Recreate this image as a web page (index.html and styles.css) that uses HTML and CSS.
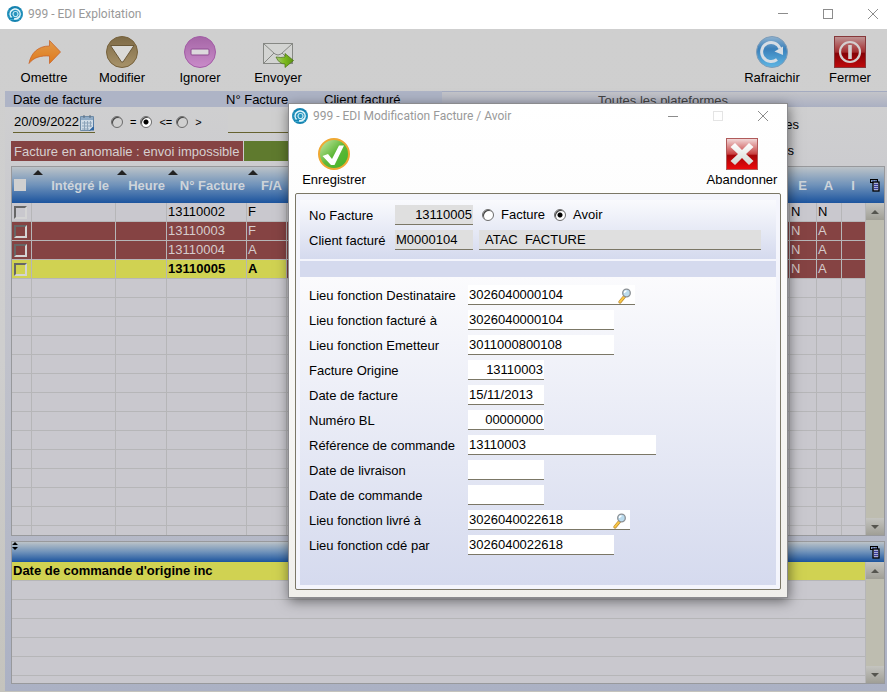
FILE: index.html
```html
<!DOCTYPE html>
<html lang="fr">
<head>
<meta charset="utf-8">
<title>999 - EDI Exploitation</title>
<link rel="stylesheet" href="styles.css">
</head>
<body>
<svg class="defs" aria-hidden="true">
  <defs>
    <linearGradient id="orange" x1="0" y1="0" x2="0" y2="1"><stop offset="0" stop-color="#e09a4c"/><stop offset="1" stop-color="#e07a1c"/></linearGradient>
    <linearGradient id="brown" x1="0" y1="0" x2="0" y2="1"><stop offset="0" stop-color="#7d6a46"/><stop offset="1" stop-color="#a8936a"/></linearGradient>
    <linearGradient id="purple" x1="0" y1="0" x2="0" y2="1"><stop offset="0" stop-color="#a566a6"/><stop offset="1" stop-color="#c98bc9"/></linearGradient>
    <linearGradient id="arrow" x1="0" y1="0" x2="1" y2="0"><stop offset="0" stop-color="#a8c878"/><stop offset=".5" stop-color="#7cba1c"/><stop offset="1" stop-color="#5c9414"/></linearGradient>
    <linearGradient id="blue" x1="0" y1="0" x2="0" y2="1"><stop offset="0" stop-color="#8fb2cf"/><stop offset=".4" stop-color="#3a80ba"/><stop offset="1" stop-color="#5fb6e4"/></linearGradient>
    <linearGradient id="red" x1="0" y1="0" x2="0" y2="1"><stop offset="0" stop-color="#bf9696"/><stop offset=".5" stop-color="#a42c2e"/><stop offset=".55" stop-color="#860206"/><stop offset="1" stop-color="#c00a0c"/></linearGradient>
    <linearGradient id="redlight" x1="0" y1="0" x2="0" y2="1"><stop offset="0" stop-color="#f2dcdc"/><stop offset=".5" stop-color="#c84040"/><stop offset=".55" stop-color="#a50408"/><stop offset="1" stop-color="#ee0a0c"/></linearGradient>
    <linearGradient id="green" x1="0" y1="0" x2="1" y2="1"><stop offset="0" stop-color="#d2ecb0"/><stop offset=".5" stop-color="#5fb838"/><stop offset="1" stop-color="#3fb428"/></linearGradient>
    <linearGradient id="silver" x1="0" y1="0" x2="0" y2="1"><stop offset="0" stop-color="#fff"/><stop offset="1" stop-color="#d4d8d4"/></linearGradient>
    <symbol id="logo" viewBox="0 0 16 16">
      <circle cx="8" cy="8" r="8" fill="#1583b0"/>
      <path d="M1 5h14M0 8h16M1 11h14M3 13.500h10" stroke="#3aa7cd" stroke-width="1"/>
      <path d="M4.500 11.500A5 5 0 1 1 12.500 10.500Q11 13 7 13" fill="none" stroke="#e4f6fb" stroke-width="1.500"/>
      <circle cx="8.500" cy="8" r="2.500" fill="none" stroke="#bfe8f4" stroke-width="1.200"/>
    </symbol>
    <symbol id="lens" viewBox="0 0 16 16">
      <path d="M7.500 8.500L3 14" stroke="#b9852e" stroke-width="3.200" stroke-linecap="round"/>
      <path d="M7.300 8.700L3 13.800" stroke="#f9c845" stroke-width="2" stroke-linecap="round"/>
      <circle cx="9.500" cy="5" r="3.800" fill="#bcdcee" stroke="#8c9094" stroke-width="1.300"/>
      <path d="M7.500 5a2 2 0 0 1 2-2" stroke="#fff" stroke-width="1.300" fill="none"/>
    </symbol>
    <symbol id="cols" viewBox="0 0 10 13">
      <path d="M0 .5h8M.5 0v4M0 3.500h3M7.500 0v3" fill="none" stroke="#000"/>
      <path d="M2 2h5" stroke="#3a45a0" stroke-dasharray="2 1"/>
      <rect x="3" y="3" width="6" height="9" fill="#a9aed8" stroke="#000" stroke-width="1.300"/>
      <path d="M4 5.500h4M4 7.500h4M4 9.500h4" stroke="#3a3f9c"/>
    </symbol>
  </defs>
</svg>

<header class="titlebar">
  <svg class="logo"><use href="#logo"/></svg>
  <h1>999 - EDI Exploitation</h1>
  <div class="winbtns">
    <button type="button" aria-label="Réduire"><svg viewBox="0 0 12 12"><path d="M1 5.500h10"/></svg></button>
    <button type="button" aria-label="Agrandir"><svg viewBox="0 0 12 12"><rect x="1.500" y="1.500" width="9" height="9"/></svg></button>
    <button type="button" aria-label="Fermer la fenêtre"><svg viewBox="0 0 12 12"><path d="M1 1l10 10M11 1L1 11"/></svg></button>
  </div>
</header>

<main class="app">
  <nav class="toolbar">
    <button type="button" class="tool"><svg viewBox="0 0 32 32"><path d="M1 27.500C3 17 10 10 21.500 10V4.500L32.500 16l-11 11.500V20C13 19.500 6 21 1 27.500z" fill="url(#orange)" stroke="#c9652c" stroke-width=".8"/></svg>Omettre</button>
    <button type="button" class="tool"><svg viewBox="0 0 32 32"><circle cx="16" cy="16" r="15.500" fill="url(#brown)" stroke="#77623c"/><path d="M4.500 9.500h23.500L17 26h-1.500z" fill="#dadad8" stroke="#6b5938" stroke-linejoin="round"/></svg>Modifier</button>
    <button type="button" class="tool"><svg viewBox="0 0 32 32"><circle cx="16" cy="16" r="15.500" fill="url(#purple)" stroke="#a35ca6"/><rect x="7" y="13" width="18" height="6" rx="1" fill="#dcd9dc" stroke="#8f4c92"/></svg>Ignorer</button>
    <button type="button" class="tool"><svg viewBox="0 0 32 32"><rect x="1.500" y="7.500" width="29" height="20" fill="#d3d4d2" stroke="#868884"/><path d="M2 8l11 10q3 2 6 0L30 8M2 27l10-10M30 27L20 17" fill="none" stroke="#868884"/><path d="M14 21q5 1 9 0v-3.500l8.500 7-8.500 7V28q-6 0-9-7z" fill="url(#arrow)" stroke="#466e10" stroke-width=".7"/></svg>Envoyer</button>
    <button type="button" class="tool push"><svg viewBox="0 0 32 32"><circle cx="16" cy="16" r="15.500" fill="url(#blue)" stroke="#7d9cb8"/><path d="M21 23.500A9.500 9.500 0 1 1 24 12.500" fill="none" stroke="#d6dde4" stroke-width="3"/><path d="M18.500 15.500l8.500-5v8.500z" fill="#d6dde4"/></svg>Rafraichir</button>
    <button type="button" class="tool"><svg viewBox="0 0 32 32"><rect x=".5" y=".5" width="31" height="31" fill="url(#red)" stroke="#86383a"/><circle cx="16" cy="16" r="10" fill="none" stroke="#d4d0d0" stroke-width="2.200"/><path d="M16 9v14" stroke="#d4d0d0" stroke-width="3.600"/></svg>Fermer</button>
  </nav>

  <div class="bands">
    <div class="band"><span class="b1">Date de facture</span><span class="b2">N° Facture</span><span>Client facturé</span></div>
    <div class="band band-right">Toutes les plateformes</div>
  </div>

  <div class="panel">
    <form class="filters">
      <input class="field date" aria-label="Date de facture" value="20/09/2022">
      <button type="button" class="cal" aria-label="Calendrier"><svg viewBox="0 0 15 16"><path d="M.5 1.500h13v10l-3 4H.5z" fill="#cfdbe6" stroke="#6f8ca8"/><rect x="1" y="2" width="12" height="3" fill="#8fabc6"/><path d="M4 0v3M10 0v3" stroke="#5a6a7c"/><path d="M2 8h10M2 11h10M2 14h7M4.500 6v9M7.500 6v9M10.500 6v6" stroke="#8da4ba"/><path d="M14 1v14.500H9l4.500-4z" fill="#2d64a0"/></svg></button>
      <label class="opt first"><input type="radio" name="op">=</label>
      <label class="opt"><input type="radio" name="op" checked>&lt;=</label>
      <label class="opt"><input type="radio" name="op">&gt;</label>
      <input class="field num" aria-label="N° Facture">
      <div class="tails"><span>Toutes</span><span>Envoyés</span></div>
    </form>
    <div class="legend"><span class="bad">Facture en anomalie : envoi impossible</span><span class="good"></span></div>

    <div class="grid main">
      <div class="view">
        <table>
          <colgroup><col class="c1"><col class="c2"><col class="c3"><col class="c4"><col class="c5"><col><col class="c7"><col class="c8"><col class="c9"></colgroup>
          <thead><tr><th><input type="checkbox" class="all" aria-label="Tout"></th><th class="s wide">Intégré le</th><th class="s">Heure</th><th class="s">N° Facture</th><th class="s fa">F/A</th><th class="s"></th><th class="c">E</th><th class="c">A</th><th class="c">I</th></tr></thead>
          <tbody>
            <tr><td><input type="checkbox" aria-label="13110002"></td><td></td><td></td><td>13110002</td><td>F</td><td></td><td>N</td><td>N</td><td></td></tr>
            <tr class="err"><td><input type="checkbox" aria-label="13110003"></td><td></td><td></td><td>13110003</td><td>F</td><td></td><td>N</td><td>A</td><td></td></tr>
            <tr class="err"><td><input type="checkbox" aria-label="13110004"></td><td></td><td></td><td>13110004</td><td>A</td><td></td><td>N</td><td>A</td><td></td></tr>
            <tr class="err"><td class="sel"><input type="checkbox" aria-label="13110005"></td><td class="sel"></td><td class="sel"></td><td class="sel">13110005</td><td class="sel">A</td><td></td><td>N</td><td>A</td><td></td></tr>
            <tr><td></td><td></td><td></td><td></td><td></td><td></td><td></td><td></td><td></td></tr>
            <tr><td></td><td></td><td></td><td></td><td></td><td></td><td></td><td></td><td></td></tr>
            <tr><td></td><td></td><td></td><td></td><td></td><td></td><td></td><td></td><td></td></tr>
            <tr><td></td><td></td><td></td><td></td><td></td><td></td><td></td><td></td><td></td></tr>
            <tr><td></td><td></td><td></td><td></td><td></td><td></td><td></td><td></td><td></td></tr>
            <tr><td></td><td></td><td></td><td></td><td></td><td></td><td></td><td></td><td></td></tr>
            <tr><td></td><td></td><td></td><td></td><td></td><td></td><td></td><td></td><td></td></tr>
            <tr><td></td><td></td><td></td><td></td><td></td><td></td><td></td><td></td><td></td></tr>
            <tr><td></td><td></td><td></td><td></td><td></td><td></td><td></td><td></td><td></td></tr>
            <tr><td></td><td></td><td></td><td></td><td></td><td></td><td></td><td></td><td></td></tr>
            <tr><td></td><td></td><td></td><td></td><td></td><td></td><td></td><td></td><td></td></tr>
            <tr><td></td><td></td><td></td><td></td><td></td><td></td><td></td><td></td><td></td></tr>
            <tr><td></td><td></td><td></td><td></td><td></td><td></td><td></td><td></td><td></td></tr>
            <tr class="cut"><td></td><td></td><td></td><td></td><td></td><td></td><td></td><td></td><td></td></tr>
          </tbody>
        </table>
      </div>
      <div class="scroll">
        <button type="button" class="corner" aria-label="Colonnes"><svg><use href="#cols"/></svg></button>
        <button type="button" class="arrow" aria-label="Haut"><i class="up"></i></button>
        <div class="track"></div>
        <button type="button" class="arrow" aria-label="Bas"><i class="down"></i></button>
      </div>
    </div>

    <div class="grid lower">
      <div class="view">
        <table>
          <thead><tr><th><svg class="sort" viewBox="0 0 6 8"><path d="M3 0l3 3H0zM3 8L0 5h6z"/></svg></th></tr></thead>
          <tbody>
            <tr><td class="sel">Date de commande d'origine inc</td></tr>
            <tr><td></td></tr><tr><td></td></tr><tr><td></td></tr><tr><td></td></tr><tr><td></td></tr><tr class="cut"><td></td></tr>
          </tbody>
        </table>
      </div>
      <div class="scroll">
        <button type="button" class="corner" aria-label="Colonnes"><svg><use href="#cols"/></svg></button>
        <button type="button" class="arrow" aria-label="Haut"><i class="up"></i></button>
        <div class="track"></div>
        <button type="button" class="arrow" aria-label="Bas"><i class="down"></i></button>
      </div>
    </div>
  </div>
</main>

<section class="dialog" role="dialog" aria-labelledby="dlg-title">
  <header class="titlebar small">
    <svg class="logo"><use href="#logo"/></svg>
    <h2 id="dlg-title">999 - EDI Modification Facture / Avoir</h2>
    <div class="winbtns">
      <button type="button" aria-label="Réduire"><svg viewBox="0 0 12 12"><path d="M1 6.500h10"/></svg></button>
      <button type="button" aria-label="Agrandir" disabled><svg viewBox="0 0 12 12"><rect x="1.500" y="1.500" width="9" height="9"/></svg></button>
      <button type="button" aria-label="Fermer la fenêtre"><svg viewBox="0 0 12 12"><path d="M1 1l10 10M11 1L1 11"/></svg></button>
    </div>
  </header>
  <div class="actions">
    <button type="button" class="tool"><svg viewBox="0 0 32 32"><circle cx="16" cy="16" r="15" fill="url(#green)" stroke="#efa832" stroke-width="2"/><path d="M4.500 18l5.500-2 4 5 7-13.500h5L16.500 27h-3.500z" fill="#fff"/></svg>Enregistrer</button>
    <button type="button" class="tool"><svg viewBox="0 0 32 32"><rect x=".5" y=".5" width="31" height="31" fill="url(#redlight)" stroke="#b05a5a"/><path d="M9 5l7 7 7-7 4.500 4-7.500 7 7.500 7-4.500 4-7-7-7 7-4.500-4 7.500-7-7.500-7z" fill="url(#silver)"/></svg>Abandonner</button>
  </div>
  <form class="frame">
    <div class="top">
      <div class="row"><label for="no">No Facture</label><input id="no" class="field ro w78 r" value="13110005" readonly>
        <label class="opt"><input type="radio" name="kind">Facture</label>
        <label class="opt"><input type="radio" name="kind" checked>Avoir</label></div>
      <div class="row"><label for="cl">Client facturé</label><input id="cl" class="field ro w78" value="M0000104" readonly><input class="field ro name" aria-label="Nom du client" value="ATAC  FACTURE" readonly></div>
    </div>
    <div class="strip"></div>
    <div class="body">
      <div class="row"><label for="f1">Lieu fonction Destinataire</label><span class="lookup"><input id="f1" class="field w146" value="3026040000104"><button type="button" aria-label="Rechercher"><svg><use href="#lens"/></svg></button></span></div>
      <div class="row"><label for="f2">Lieu fonction facturé à</label><input id="f2" class="field w146" value="3026040000104"></div>
      <div class="row"><label for="f3">Lieu fonction Emetteur</label><input id="f3" class="field w146" value="3011000800108"></div>
      <div class="row"><label for="f4">Facture Origine</label><input id="f4" class="field w76 r" value="13110003"></div>
      <div class="row"><label for="f5">Date de facture</label><input id="f5" class="field w76" value="15/11/2013"></div>
      <div class="row"><label for="f6">Numéro BL</label><input id="f6" class="field w76 r" value="00000000"></div>
      <div class="row"><label for="f7">Référence de commande</label><input id="f7" class="field w188" value="13110003"></div>
      <div class="row"><label for="f8">Date de livraison</label><input id="f8" class="field w76"></div>
      <div class="row"><label for="f9">Date de commande</label><input id="f9" class="field w76"></div>
      <div class="row"><label for="f10">Lieu fonction livré à</label><span class="lookup"><input id="f10" class="field w141" value="3026040022618"><button type="button" aria-label="Rechercher"><svg><use href="#lens"/></svg></button></span></div>
      <div class="row"><label for="f11">Lieu fonction cdé par</label><input id="f11" class="field w146" value="3026040022618"></div>
    </div>
  </form>
</section>
</body>
</html>
```
FILE: styles.css
```css
* { box-sizing: border-box; }
body {
  margin: 0;
  min-height: 100vh;
  display: flex;
  flex-direction: column;
  position: relative;
  font: 13px/16px "Liberation Sans", Arial, sans-serif;
  color: #000;
}
button { font: inherit; color: inherit; background: none; border: 0; padding: 0; }
.defs { position: absolute; width: 0; height: 0; }

.titlebar { display: flex; align-items: center; height: 28px; padding: 0 8px 0 7px; gap: 5px; background: #fff; margin-bottom: 1px; }
.titlebar.small { height: 24px; padding: 0 18px 0 3px; background: none; }
.titlebar h1, .titlebar h2 { margin: 0; font: 12px/16px Roboto, "Open Sans", sans-serif; color: #999; }
.logo { width: 16px; height: 16px; }
.winbtns { display: flex; gap: 33px; margin-left: auto; }
.winbtns button { display: flex; }
.winbtns svg { width: 12px; height: 12px; fill: none; stroke: #8c8c8c; }
.winbtns button:disabled svg { stroke: #e4e4e4; }

.app {
  flex: 1;
  display: flex;
  flex-direction: column;
  padding: 0 0 1px 5px;
  background: linear-gradient(#cfcfcf, #cecece 50%, #c4c3bd);
}
.toolbar { display: flex; height: 62px; padding: 7px 0 0; }
.tool { display: flex; flex-direction: column; align-items: center; width: 78px; gap: 2px; }
.tool svg { width: 32px; height: 32px; overflow: visible; }
.toolbar .push { margin-left: auto; }
.toolbar .tool:last-child { margin-right: -2px; }

.bands { display: flex; line-height: 17px; }
.band { flex: 0 0 437px; display: flex; height: 16px; padding-left: 8px; background: #aeb4c6; }
.b1 { width: 213px; }
.b2 { width: 98px; }
.band-right { flex: 1; padding-left: 156px; border-top: 1px solid #a4abc0; background: linear-gradient(#c3c4c9, #abb0c2); color: #444; }

.panel {
  flex: 1;
  display: flex;
  flex-direction: column;
  padding: 5px 2px 6px 6px;
  background: linear-gradient(#cfcfd0, #c9c9ce 20%, #abb1c4);
}
.field {
  height: 20px;
  padding: 0 1px 1px;
  border: 0;
  border-bottom: 1px solid #7b7766;
  border-radius: 0;
  background: #fff;
  font: inherit;
  color: #000;
  min-width: 0;
}
.filters { display: flex; height: 29px; }
.filters .field { background: #cfcfcf; border-color: #66622f; height: 21px; }
.date { width: 67px; margin-left: 2px; }
.cal { width: 15px; height: 21px; padding-top: 2px; border-bottom: 1px solid #66622f; }
.cal svg { width: 15px; height: 16px; display: block; }
.opt { display: flex; align-items: center; gap: 6px; }
.filters .opt { height: 19px; gap: 7px; font-size: 11px; margin-right: 4px; }
.filters .opt.first { margin-left: 16px; }
.num { width: 90px; margin-left: 22px; }
.tails { margin-left: auto; margin-right: 86px; line-height: 26px; text-align: right; }
.tails span { display: block; }
.tails span:last-child { padding-right: 5px; }

input[type="radio"] {
  appearance: none;
  width: 12px;
  height: 12px;
  margin: 0;
  border: 1px solid #6c6c6c;
  border-radius: 50%;
  background: #fff;
  box-shadow: inset 1px 1px 0 #444;
}
.filters input[type="radio"] { background-color: #d0d0d0; }
input[type="radio"]:checked { background: radial-gradient(circle, #000 2px, #fff 3px); }

.legend { display: flex; height: 20px; line-height: 21px; gap: 1px; }
.bad { width: 232px; padding-left: 3px; background: #854343; color: #d6d0d0; white-space: nowrap; }
.good { width: 300px; background: #5f7a2e; }

.grid { display: flex; border: 1px solid #98999c; background: #c9c8ce; }
.main { margin-top: 5px; }
.lower { margin-top: 5px; }
.view { flex: 1; min-width: 0; }
.grid table { width: 100%; table-layout: fixed; border-collapse: separate; border-spacing: 0; }
.grid thead tr { background: linear-gradient(#bcc3c8, #6f92ba 50%, #1c549e); }
.grid th { height: 36px; padding: 2px 2px 0 0; text-align: right; color: #ced4da; white-space: nowrap; position: relative; }
.grid th:first-child { padding-top: 0; }
.grid th.wide { padding-right: 7px; }
.lower th { height: 20px; padding: 0; text-align: left; }
.grid th.c { text-align: center; }
.grid th.fa { padding-right: 5px; }
.s::before {
  content: "";
  position: absolute;
  left: 1px;
  top: 3px;
  border: 5px solid transparent;
  border-top: 0;
  border-bottom-color: #222;
}
.sort { width: 6px; height: 8px; display: block; margin: 0 0 12px; }
.grid td { height: 19px; padding: 0 0 0 1px; line-height: 18px; border-right: 1px solid #b6b6b8; border-bottom: 1px solid #b6b6b8; white-space: nowrap; }
.grid .cut td { height: 9px; border-bottom: 0; }
.lower .cut td { height: 7px; }
.err td { background: #854343; color: #d6cccc; }
.grid td.sel { background: #d0d252; color: #000; font-weight: bold; }
.c1 { width: 20px; } .c2 { width: 84px; } .c3 { width: 51px; } .c4 { width: 80px; } .c5 { width: 40px; }
.c7 { width: 27px; } .c8 { width: 25px; } .c9 { width: 24px; }
input[type="checkbox"] {
  appearance: none;
  display: block;
  width: 13px;
  height: 13px;
  margin: 0 0 0 1px;
  border: 2px solid;
  border-color: #666 #d4d4d4 #d4d4d4 #666;
}
.grid .all { width: 12px; height: 12px; margin-left: 2px; border: 0; background: #d0d0d0; }

.scroll { width: 18px; display: flex; flex-direction: column; }
.corner { height: 36px; background: linear-gradient(#bcc3c8, #6f92ba 50%, #1c549e); }
.lower .corner { height: 20px; }
.corner svg { width: 10px; height: 13px; display: block; margin: 0 auto; }
.arrow { height: 17px; display: flex; align-items: center; justify-content: center; background: linear-gradient(#c4c4c0, #a09f96); }
.track { flex: 1; background: #bebdb0; }
.up, .down { border: 4px solid transparent; }
.up { border-top: 0; border-bottom-color: #55554f; }
.down { border-bottom: 0; border-top-color: #55554f; }

.dialog {
  position: absolute;
  left: 288px;
  top: 103px;
  width: 500px;
  padding: 0 6px 7px;
  border: 1px solid #8b8b8e;
  background: linear-gradient(#fff, #fdfdfd 20%, #f0efeb);
  box-shadow: 1px 3px 12px rgba(0, 0, 0, .5);
}
.dialog .titlebar { margin: 0 -6px; }
.actions { display: flex; justify-content: space-between; height: 65px; padding: 10px 0 0; }
.frame { border: 1px solid #7b7766; border-radius: 2px; padding: 6px 4px 4px; background: #f4f5fc; }
.top { height: 59px; padding: 5px 15px 0 9px; background: linear-gradient(#f9fafd, #d5daee); display: flex; flex-direction: column; gap: 5px; }
.row { display: flex; height: 20px; }
.row > label:first-child { line-height: 22px; white-space: nowrap; flex: 0 0 159px; }
.top .row > label:first-child { flex-basis: 86px; }
.row .opt { margin-left: 9px; gap: 7px; }
.w76 { width: 76px; } .w78 { width: 78px; } .w141 { width: 141px; } .w146 { width: 146px; } .w188 { width: 188px; }
.r { text-align: right; }
.ro { background: #dfdfdf; }
.name { flex: 1; margin-left: 6px; padding-left: 6px; white-space: pre; }
.strip { height: 16px; margin-top: 2px; background: #d5daee; }
.body { padding: 8px 9px 30px; background: linear-gradient(#fbfbfd, #d5daee); display: flex; flex-direction: column; gap: 5px; }
.lookup { display: flex; }
.lookup button { width: 21px; padding: 2px 0 0 3px; background: #fff; border-bottom: 1px solid #7b7766; }
.lookup svg { width: 16px; height: 16px; display: block; }
```
